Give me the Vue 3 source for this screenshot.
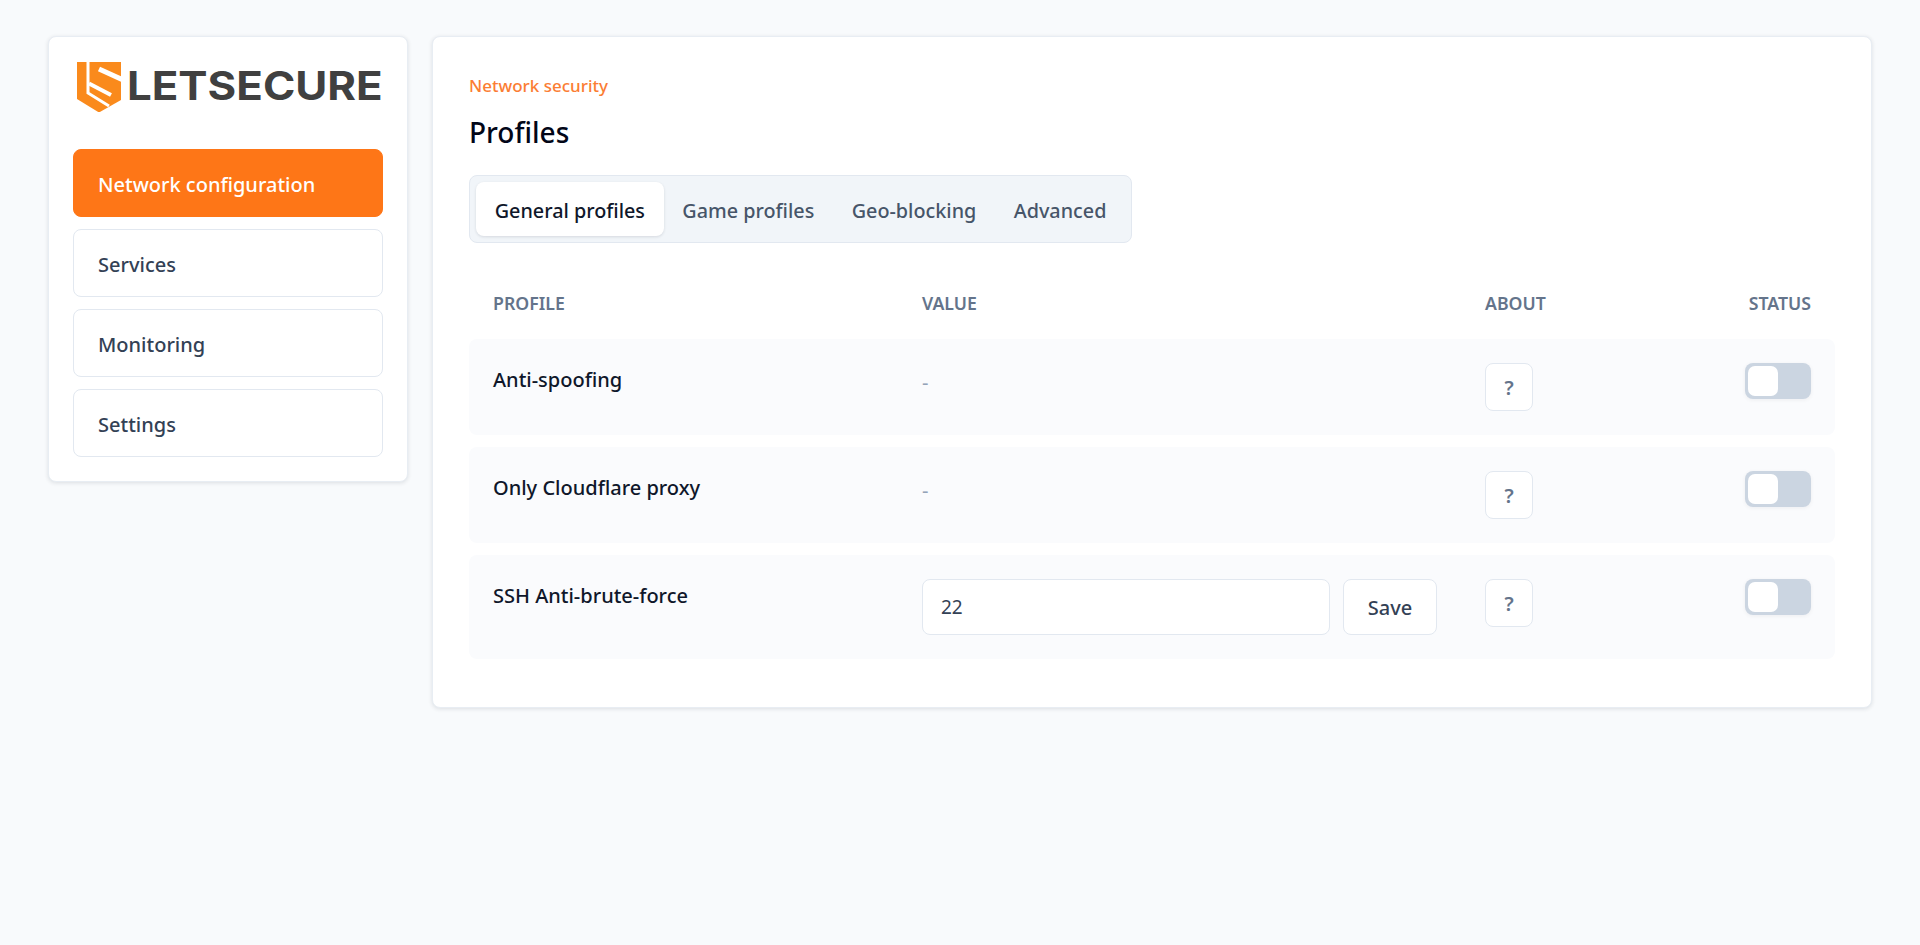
<script setup>
const navItems = [
  { label: 'Network configuration', active: true },
  { label: 'Services', active: false },
  { label: 'Monitoring', active: false },
  { label: 'Settings', active: false },
];

const tabs = ['General profiles', 'Game profiles', 'Geo-blocking', 'Advanced'];

const profiles = [
  { name: 'Anti-spoofing', port: null },
  { name: 'Only Cloudflare proxy', port: null },
  { name: 'SSH Anti-brute-force', port: '22' },
];
</script>

<template>
  <div class="page">
    <aside class="sidebar">
      <div class="logo">
        <svg class="logo-mark" viewBox="0 0 44 50" width="44" height="50">
          <path fill="#fa8a1c" d="M0 0H44V38L22 50.500 0 37Z" />
          <g fill="none" stroke="#fff">
            <path stroke-width="3" d="M11 -1V31L32 44" />
            <path stroke-width="5" d="M22 7L46 18" />
            <path stroke-width="4" d="M12 21.500L34 33" />
          </g>
        </svg>
        <span class="logo-text">LETSECURE</span>
      </div>
      <nav class="nav">
        <a v-for="item in navItems" :key="item.label" class="nav-item" :class="{ active: item.active }">{{ item.label }}</a>
      </nav>
    </aside>

    <main class="panel">
      <div class="eyebrow">Network security</div>
      <h1 class="title">Profiles</h1>
      <div class="tabs">
        <button v-for="(tab, i) in tabs" :key="tab" class="tab" :class="{ active: i === 0 }">{{ tab }}</button>
      </div>

      <div class="table-head row-grid">
        <span>PROFILE</span>
        <span>VALUE</span>
        <span>ABOUT</span>
        <span class="right">STATUS</span>
      </div>
      <div class="rows">
        <div v-for="p in profiles" :key="p.name" class="row row-grid">
          <div class="name">{{ p.name }}</div>
          <div v-if="p.port" class="value-form">
            <input class="port" :value="p.port" />
            <button class="save">Save</button>
          </div>
          <div v-else class="dash">-</div>
          <div><button class="help">?</button></div>
          <div class="right"><span class="toggle"><span class="knob"></span></span></div>
        </div>
      </div>
    </main>
  </div>
</template>

<style scoped>
.page {
  display: flex;
  align-items: flex-start;
  gap: 24px;
  padding: 36px 48px;
  font-family: "Noto Sans", sans-serif;
}
.sidebar {
  flex: 0 0 360px;
  box-sizing: border-box;
  padding: 24px;
  background: #fff;
  border: 1px solid #e8edf3;
  border-radius: 8px;
  box-shadow: 0 1px 4px rgba(15, 23, 42, 0.12);
}
.logo {
  display: flex;
  align-items: center;
  height: 52px;
  margin-bottom: 36px;
  padding-left: 4px;
}
.logo-mark {
  flex: none;
}
.logo-text {
  display: inline-block;
  margin-left: 6px;
  padding-bottom: 3px;
  font-family: Inter, sans-serif;
  font-size: 40px;
  font-weight: 700;
  color: #404040;
  line-height: 1;
  transform: scaleX(1.095);
  transform-origin: left center;
}
.nav {
  display: flex;
  flex-direction: column;
  gap: 12px;
}
.nav-item {
  display: flex;
  align-items: center;
  height: 68px;
  box-sizing: border-box;
  padding: 2px 24px 0;
  font-size: 20px;
  font-weight: 500;
  color: #334155;
  background: #fff;
  border: 1px solid #e2e8f0;
  border-radius: 8px;
}
.nav-item.active {
  color: #fff;
  background: #fe7617;
  border-color: #fe7617;
}
.panel {
  flex: 1;
  box-sizing: border-box;
  padding: 36px;
  background: #fff;
  border: 1px solid #e8edf3;
  border-radius: 8px;
  box-shadow: 0 1px 4px rgba(15, 23, 42, 0.12);
}
.eyebrow {
  font-size: 17px;
  font-weight: 500;
  line-height: 26px;
  color: #fb7d33;
}
.title {
  margin: 15px 0 0;
  font-size: 28px;
  font-weight: 500;
  line-height: 36px;
  color: #020617;
}
.tabs {
  display: flex;
  width: fit-content;
  margin-top: 25px;
  padding: 6px;
  background: #f1f5f9;
  border: 1px solid #e2e8f0;
  border-radius: 8px;
}
.tab {
  height: 54px;
  padding: 2px 18.7px 0;
  font-family: inherit;
  font-size: 19.8px;
  font-weight: 500;
  color: #475569;
  background: transparent;
  border: 0;
  border-radius: 8px;
}
.tab.active {
  color: #0f172a;
  background: #fff;
  box-shadow: 0 1px 3px rgba(15, 23, 42, 0.12);
}
.row-grid {
  display: grid;
  grid-template-columns: 429px 563px 1fr auto;
  padding: 0 24px;
}
.table-head {
  margin-top: 48px;
  font-size: 17.7px;
  font-weight: 600;
  line-height: 24px;
  color: #64748b;
}
.right {
  text-align: right;
}
.rows {
  display: flex;
  flex-direction: column;
  gap: 12px;
  margin-top: 24px;
  margin-bottom: 12px;
}
.row {
  padding-top: 24px;
  padding-bottom: 24px;
  background: #fafbfd;
  border-radius: 8px;
}
.name {
  font-size: 20px;
  font-weight: 500;
  line-height: 34px;
  color: #0f172a;
}
.dash {
  font-size: 20px;
  line-height: 40px;
  color: #94a3b8;
}
.value-form {
  display: flex;
  gap: 13px;
  padding-right: 24px;
}
.port {
  width: 408px;
  height: 56px;
  box-sizing: border-box;
  padding: 0 18px;
  font-family: inherit;
  font-size: 19px;
  color: #334155;
  background: #fff;
  border: 1px solid #e2e8f0;
  border-radius: 8px;
}
.save {
  width: 94px;
  height: 56px;
  font-family: inherit;
  font-size: 20px;
  font-weight: 500;
  color: #334155;
  background: #fff;
  border: 1px solid #e2e8f0;
  border-radius: 8px;
}
.help {
  width: 48px;
  height: 48px;
  padding: 0;
  font-family: inherit;
  font-size: 20px;
  font-weight: 600;
  color: #64748b;
  background: #fff;
  border: 1px solid #e2e8f0;
  border-radius: 8px;
}
.toggle {
  display: inline-block;
  width: 66px;
  height: 36px;
  box-sizing: border-box;
  padding: 3px;
  text-align: left;
  vertical-align: top;
  background: #cbd5e1;
  border-radius: 8px;
  box-shadow: 0 1px 4px rgba(15, 23, 42, 0.06);
}
.knob {
  display: block;
  width: 30px;
  height: 30px;
  background: #fff;
  border-radius: 7px;
}
</style>

<style>
body {
  background: #f8fafc;
}
</style>
